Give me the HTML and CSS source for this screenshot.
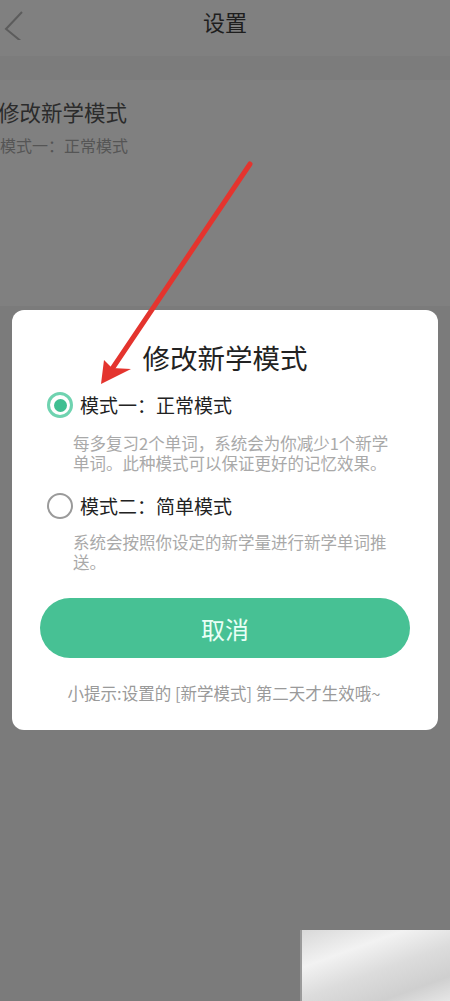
FILE: index.html
```html
<!DOCTYPE html>
<html lang="zh-CN">

<head>
  <meta charset="UTF-8" />
  <meta name="viewport" content="width=device-width, initial-scale=1.0" />
  <title>设置</title>
  <link rel="stylesheet" href="styles.css">
</head>

<body>
  <div class="page">
    <div class="header">
      <svg class="back" width="24" height="36" viewBox="0 0 24 36">
        <path d="M22 8 L6 25 L22 38" fill="none" stroke="#5c5c5c" stroke-width="2" />
      </svg>
      <div class="header-title">设置</div>
    </div>
    <div class="strip"></div>
    <div class="item">
      <div class="item-title">修改新学模式</div>
      <div class="item-sub">模式一：正常模式</div>
    </div>
    <div class="watermark"></div>
  </div>

  <div class="overlay">
    <div class="dialog">
      <div class="dialog-title">修改新学模式</div>
      <div class="option first">
        <span class="radio checked"></span>
        <span class="option-label">模式一：正常模式</span>
      </div>
      <div class="option-desc first-desc">每多复习2个单词，系统会为你减少1个新学单词。此种模式可以保证更好的记忆效果。</div>
      <div class="option second">
        <span class="radio"></span>
        <span class="option-label">模式二：简单模式</span>
      </div>
      <div class="option-desc second-desc">系统会按照你设定的新学量进行新学单词推送。</div>
      <div class="cancel">取消</div>
      <div class="hint">小提示:设置的 [新学模式] 第二天才生效哦~</div>
    </div>
  </div>

  <!-- annotation arrow drawn on top of the screenshot -->
  <svg class="arrow" width="450" height="1001" viewBox="0 0 450 1001">
    <line x1="250" y1="164" x2="110" y2="372" stroke="#e4342e" stroke-width="5" stroke-linecap="round" />
    <path d="M101 384 L104 360 L112 368 L131 369 Z" fill="#e4342e" />
  </svg>
</body>

</html>
```

FILE: styles.css
```css
* {
  box-sizing: border-box;
}

html,
body {
  margin: 0;
  width: 100%;
  height: 100%;
}

body {
  background: #7b7b7b;
  font-family: "Noto Sans CJK SC", "Noto Sans", sans-serif;
  overflow: hidden;
}

.page {
  height: 1001px;
  display: flex;
  flex-direction: column;
  background: #7b7b7b;
}

.header {
  height: 56px;
  background: #808080;
  display: flex;
  align-items: center;
  justify-content: center;
  position: relative;
}

.back {
  position: absolute;
  left: 0;
  top: 4px;
}

.header-title {
  font-size: 22px;
  color: #1e1e1e;
  line-height: 30px;
  margin-top: -14px;
}

.strip {
  height: 24px;
  background: #7c7c7c;
}

.item {
  background: #808080;
  padding: 17px 0 12px;
  height: 226px;
}

.item-title {
  font-size: 21.5px;
  line-height: 30px;
  color: #2b2b2b;
  margin-left: -2px;
}

.item-sub {
  font-size: 16px;
  line-height: 22px;
  color: #555;
  margin-top: 7px;
}

.watermark {
  margin-top: auto;
  margin-left: 300px;
  height: 71px;
  background: linear-gradient(160deg, #d8d8d8 0%, #f2f2f2 30%, #dcdcdc 55%, #cfcfcf 80%, #e6e6e6 100%);
  border-left: 2px solid #9a9a9a;
}

.overlay {
  position: absolute;
  top: 0;
  left: 0;
  right: 0;
  padding: 310px 12px 0;
}

.dialog {
  background: #fff;
  border-radius: 12px;
  padding: 30px 0 26px;
  display: flex;
  flex-direction: column;
}

.dialog-title {
  font-size: 27.5px;
  line-height: 34px;
  color: #222;
  text-align: center;
}

.option {
  display: flex;
  align-items: center;
  height: 28px;
  padding-left: 35px;
}

.option.first {
  margin-top: 17px;
}

.option.second {
  margin-top: 19px;
}

.radio {
  width: 26px;
  height: 26px;
  border-radius: 50%;
  border: 2px solid #9a9a9a;
  display: flex;
  align-items: center;
  justify-content: center;
}

.radio.checked {
  border: 3px solid #6fd3b0;
}

.radio.checked::after {
  content: "";
  width: 13px;
  height: 13px;
  border-radius: 50%;
  background: #3fbf91;
}

.option-label {
  font-size: 19px;
  color: #222;
  margin-left: 7px;
  line-height: 28px;
}

.option-desc {
  font-size: 16.5px;
  line-height: 20px;
  color: #a9a9a9;
  margin-left: 61px;
  margin-right: 36px;
}

.first-desc {
  margin-top: 14px;
}

.second-desc {
  margin-top: 12px;
}

.cancel {
  margin: 26px 28px 0;
  height: 60px;
  border-radius: 30px;
  background: #47c194;
  color: #e9fff6;
  font-size: 24px;
  display: flex;
  align-items: center;
  justify-content: center;
}

.hint {
  margin-top: 24px;
  font-size: 16.5px;
  line-height: 22px;
  color: #9a9a9a;
  text-align: center;
  padding-right: 2px;
}

.arrow {
  position: absolute;
  top: 0;
  left: 0;
  pointer-events: none;
}
```
